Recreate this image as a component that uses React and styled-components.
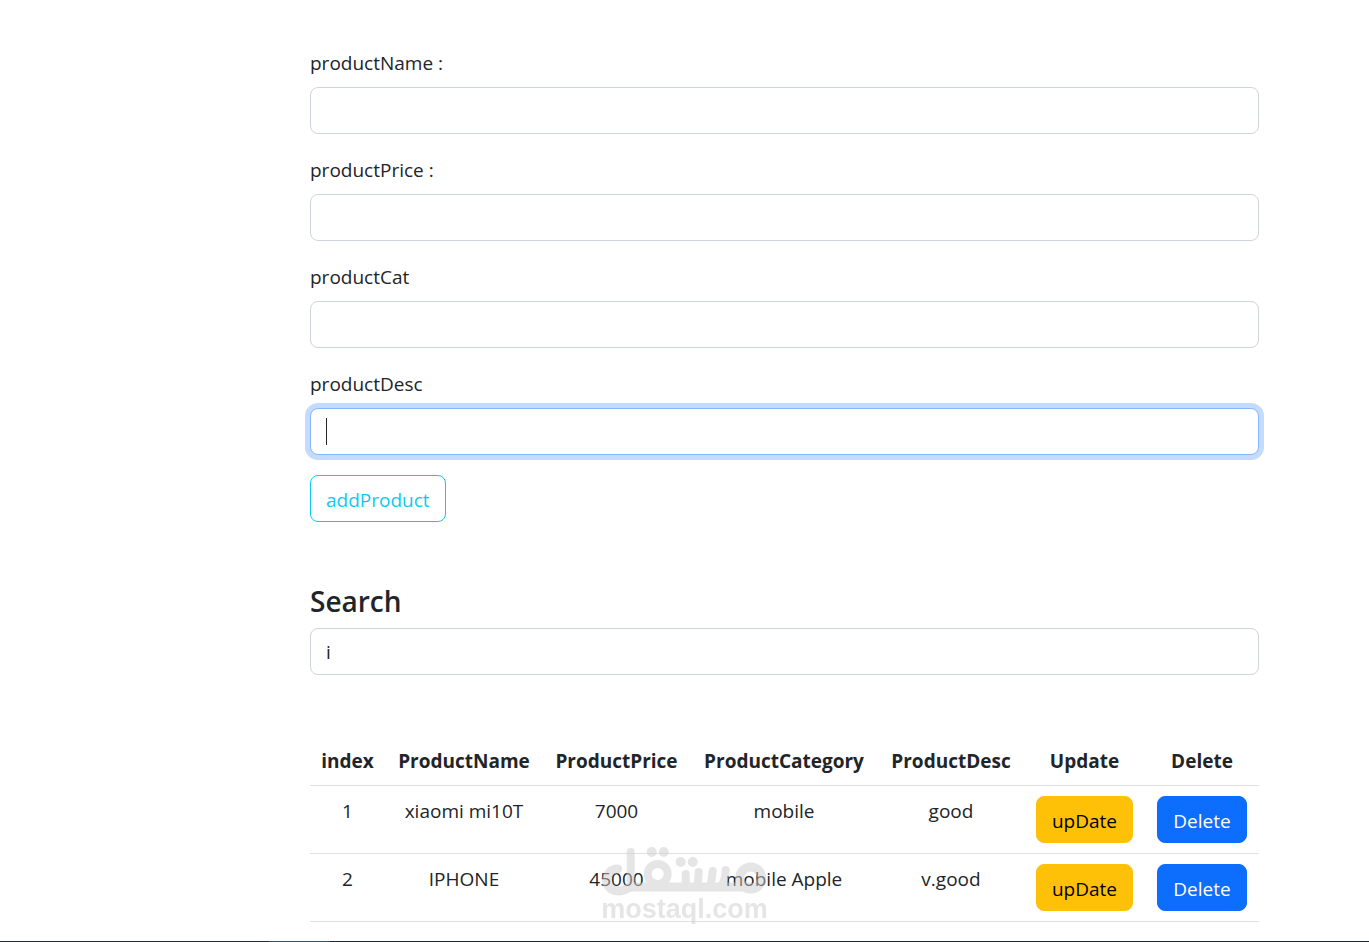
import { useState } from 'react';
import styled, { createGlobalStyle, css } from 'styled-components';

const GlobalStyle = createGlobalStyle`
  * {
    box-sizing: border-box;
  }
  body {
    margin: 0;
    background-color: #fff;
    color: #212529;
    font-family: 'Open Sans', 'Noto Sans', sans-serif;
    font-size: 19px;
    line-height: 30px;
  }
`;

const Page = styled.main`
  padding: 48px 110px 20px 310px;
`;

// form
const ProductForm = styled.form`
  display: flex;
  flex-direction: column;
  align-items: flex-start;
  gap: 20px;
`;

const FieldList = styled.div`
  display: flex;
  flex-direction: column;
  gap: 21px;
  width: 100%;
`;

const Field = styled.div`
  display: flex;
  flex-direction: column;
  align-items: flex-start;
  gap: 9px;
`;

const InputBox = styled.div`
  position: relative;
  width: 100%;
`;

const StyledInput = styled.input`
  display: block;
  width: 100%;
  height: 47px;
  padding: 0 15px;
  color: inherit;
  font: inherit;
  background-color: #fff;
  border: 1px solid #ced4da;
  border-radius: 8px;
  outline: none;
  ${({ $active }) =>
    $active &&
    css`
      border-color: #86b7fe;
      box-shadow: 0 0 0 5px #c2dbff;
      caret-color: transparent;
    `}
`;

const Caret = styled.span`
  position: absolute;
  top: 10px;
  left: 16px;
  width: 1px;
  height: 27px;
  background-color: #212529;
`;

// buttons
const buttonColors = {
  info: { text: '#0dcaf0', back: 'transparent', border: '#0dcaf0' },
  warning: { text: '#000', back: '#ffc107', border: '#ffc107' },
  primary: { text: '#fff', back: '#0d6efd', border: '#0d6efd' },
};

const Button = styled.button`
  height: 47px;
  padding: 2px 15px 0;
  font: inherit;
  color: ${({ $color }) => buttonColors[$color].text};
  background-color: ${({ $color }) => buttonColors[$color].back};
  border: 1px solid ${({ $color }) => buttonColors[$color].border};
  border-radius: 8px;
  cursor: pointer;
`;

// search
const SearchSection = styled.section`
  display: flex;
  flex-direction: column;
  align-items: flex-start;
  gap: 10px;
  margin-top: 62px;
`;

const SearchTitle = styled.label`
  font-size: 28px;
  font-weight: 600;
  line-height: 34px;
`;

// table
const Table = styled.table`
  width: 100%;
  margin-top: 60px;
  table-layout: fixed;
  border-collapse: collapse;
  text-align: center;
`;

const Col = styled.col`
  width: ${({ $width }) => $width}px;
`;

const Row = styled.tr`
  border-bottom: 1px solid #dee2e6;
`;

const HeadCell = styled.th`
  padding: 11px 0 9px;
  font-weight: 700;
`;

const Cell = styled.td`
  padding: 10px 0;
  vertical-align: top;
`;

// watermark
const Watermark = styled.div`
  position: fixed;
  bottom: 20px;
  left: 50%;
  display: flex;
  flex-direction: column;
  align-items: center;
  color: #ccc;
  opacity: 0.5;
  transform: translateX(-50%);
  pointer-events: none;
`;

const WatermarkText = styled.span`
  font-family: 'Liberation Sans', Arial, sans-serif;
  font-size: 27px;
  font-weight: 700;
  line-height: 26px;
`;

const BottomBar = styled.div`
  position: fixed;
  right: 0;
  bottom: 0;
  left: 0;
  height: 1px;
  background: linear-gradient(to right, #222b33 269px, #34536b 269px, #34536b 330px, #1c2a33 330px);
`;

const fields = [
  { id: 'productName', label: 'productName :' },
  { id: 'productPrice', label: 'productPrice :' },
  { id: 'productCat', label: 'productCat' },
  { id: 'productDesc', label: 'productDesc', active: true },
];

const columns = [
  { title: 'index', width: 75 },
  { title: 'ProductName', width: 158 },
  { title: 'ProductPrice', width: 147 },
  { title: 'ProductCategory', width: 188 },
  { title: 'ProductDesc', width: 146 },
  { title: 'Update', width: 121 },
  { title: 'Delete', width: 114 },
];

const products = [
  { name: 'xiaomi mi10T', price: '7000', category: 'mobile', desc: 'good' },
  { name: 'IPHONE', price: '45000', category: 'mobile Apple', desc: 'v.good' },
];

function MostaqlLogo() {
  return (
    <svg width="166" height="50" viewBox="0 0 166 50" fill="none" stroke="currentColor" aria-hidden="true">
      <path d="M29 6V40" strokeWidth="8" strokeLinecap="round" />
      <path
        d="M16 23C9 23 5 28 5 34C5 41 10 45 17 45C24 45 27 41 29 41H149"
        strokeWidth="9"
        strokeLinecap="round"
        strokeLinejoin="round"
      />
      <circle cx="56" cy="28" r="10" strokeWidth="8" />
      <path d="M84 28V40M97 26L96 40M111 25L109 40M124 24Q123 36 119 40" strokeWidth="8" strokeLinecap="round" />
      <circle cx="149" cy="32" r="11" strokeWidth="9" />
      <g fill="currentColor" stroke="none">
        <circle cx="50" cy="6" r="5" />
        <circle cx="62" cy="6" r="5" />
        <circle cx="79" cy="16" r="5" />
        <circle cx="91" cy="16" r="5" />
      </g>
    </svg>
  );
}

function App() {
  const [values, setValues] = useState({});
  const [search, setSearch] = useState('i');

  const handleChange = (e) => {
    setValues({ ...values, [e.target.id]: e.target.value });
  };

  return (
    <>
      <GlobalStyle />
      <Page>
        <ProductForm onSubmit={(e) => e.preventDefault()}>
          <FieldList>
            {fields.map(({ id, label, active }) => (
              <Field key={id}>
                <label htmlFor={id}>{label}</label>
                <InputBox>
                  <StyledInput id={id} type="text" $active={active} value={values[id] || ''} onChange={handleChange} />
                  {active && !values[id] && <Caret />}
                </InputBox>
              </Field>
            ))}
          </FieldList>
          <Button type="submit" $color="info">
            addProduct
          </Button>
        </ProductForm>

        <SearchSection>
          <SearchTitle htmlFor="search">Search</SearchTitle>
          <StyledInput id="search" type="text" value={search} onChange={(e) => setSearch(e.target.value)} />
        </SearchSection>

        <Table>
          <colgroup>
            {columns.map(({ title, width }) => (
              <Col key={title} $width={width} />
            ))}
          </colgroup>
          <thead>
            <Row>
              {columns.map(({ title }) => (
                <HeadCell key={title} scope="col">
                  {title}
                </HeadCell>
              ))}
            </Row>
          </thead>
          <tbody>
            {products.map((product, index) => (
              <Row key={product.name}>
                <Cell>{index + 1}</Cell>
                <Cell>{product.name}</Cell>
                <Cell>{product.price}</Cell>
                <Cell>{product.category}</Cell>
                <Cell>{product.desc}</Cell>
                <Cell>
                  <Button type="button" $color="warning">
                    upDate
                  </Button>
                </Cell>
                <Cell>
                  <Button type="button" $color="primary">
                    Delete
                  </Button>
                </Cell>
              </Row>
            ))}
          </tbody>
        </Table>
      </Page>

      <Watermark>
        <MostaqlLogo />
        <WatermarkText>mostaql.com</WatermarkText>
      </Watermark>
      <BottomBar />
    </>
  );
}

export default App;
